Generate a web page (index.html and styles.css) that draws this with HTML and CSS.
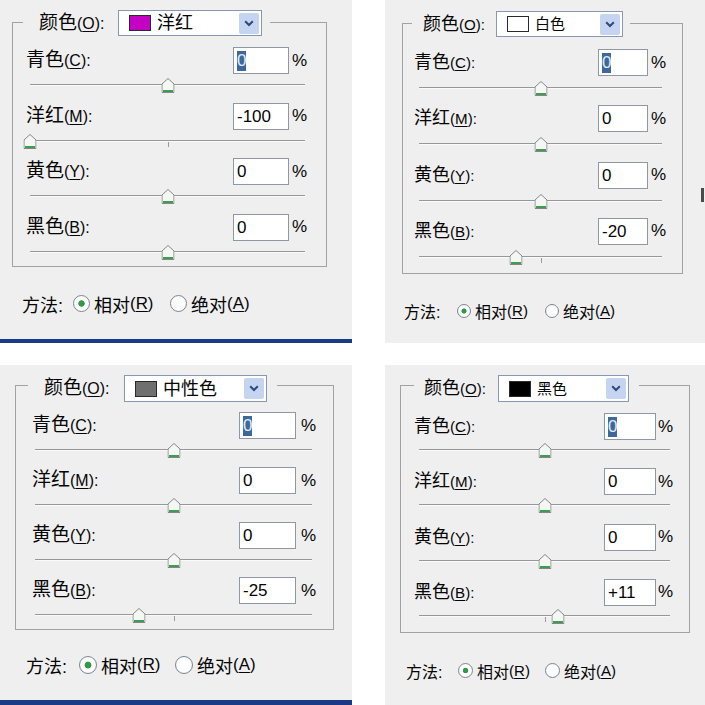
FILE: index.html
```html
<!DOCTYPE html>
<html lang="zh-CN">
<head>
    <meta charset="UTF-8">
    <meta name="viewport" content="width=device-width, initial-scale=1.0">
    <title>可选颜色</title>
    <link rel="stylesheet" href="styles.css">
</head>
<body>
    <svg class="defs" width="0" height="0" aria-hidden="true">
        <symbol id="knob" viewBox="0 0 13 15">
            <path d="M0.5 6 L6.5 0.5 L12.5 6 V14.5 H0.5 Z" fill="#f4f8f4" stroke="#858585"/>
            <path d="M1.5 13 H11.5" stroke="#3f9d4f" stroke-width="2"/>
        </symbol>
        <symbol id="chevron" viewBox="0 0 10 7">
            <path d="M1.2 1.2 L5 5 L8.8 1.2" fill="none" stroke="#2f4a7a" stroke-width="2"/>
        </symbol>
    </svg>

    <div class="sheet">
        <!-- 洋红 -->
        <section class="dlg dlg-1">
            <fieldset class="group">
                <legend class="group-head">
                    <span class="lbl head-lbl">颜色<span class="key">(<u>O</u>):</span></span>
                    <span class="dd">
                        <span class="swatch swatch-magenta"></span>
                        <span class="dd-text">洋红</span>
                        <span class="dd-btn"><svg width="10" height="7"><use href="#chevron"/></svg></span>
                    </span>
                </legend>
                <div class="row">
                    <span class="lbl row-lbl">青色<span class="key">(<u>C</u>):</span></span>
                    <span class="num"><span class="sel">0</span></span>
                    <span class="pct">%</span>
                </div>
                <div class="slider"><svg class="knob" style="left:50%"><use href="#knob"/></svg></div>
                <div class="row">
                    <span class="lbl row-lbl">洋红<span class="key">(<u>M</u>):</span></span>
                    <span class="num">-100</span>
                    <span class="pct">%</span>
                </div>
                <div class="slider"><svg class="knob" style="left:0%"><use href="#knob"/></svg></div>
                <div class="row">
                    <span class="lbl row-lbl">黄色<span class="key">(<u>Y</u>):</span></span>
                    <span class="num">0</span>
                    <span class="pct">%</span>
                </div>
                <div class="slider"><svg class="knob" style="left:50%"><use href="#knob"/></svg></div>
                <div class="row">
                    <span class="lbl row-lbl">黑色<span class="key">(<u>B</u>):</span></span>
                    <span class="num">0</span>
                    <span class="pct">%</span>
                </div>
                <div class="slider"><svg class="knob" style="left:50%"><use href="#knob"/></svg></div>
            </fieldset>
            <div class="method">
                <span class="method-lbl">方法:</span>
                <span class="opt"><span class="radio on"></span>相对<span class="key">(<u>R</u>)</span></span>
                <span class="opt"><span class="radio"></span>绝对<span class="key">(<u>A</u>)</span></span>
            </div>
        </section>

        <!-- 白色 -->
        <section class="dlg dlg-2">
            <fieldset class="group">
                <legend class="group-head">
                    <span class="lbl head-lbl">颜色<span class="key">(<u>O</u>):</span></span>
                    <span class="dd">
                        <span class="swatch swatch-white"></span>
                        <span class="dd-text">白色</span>
                        <span class="dd-btn"><svg width="10" height="7"><use href="#chevron"/></svg></span>
                    </span>
                </legend>
                <div class="row">
                    <span class="lbl row-lbl">青色<span class="key">(<u>C</u>):</span></span>
                    <span class="num"><span class="sel">0</span></span>
                    <span class="pct">%</span>
                </div>
                <div class="slider"><svg class="knob" style="left:50%"><use href="#knob"/></svg></div>
                <div class="row">
                    <span class="lbl row-lbl">洋红<span class="key">(<u>M</u>):</span></span>
                    <span class="num">0</span>
                    <span class="pct">%</span>
                </div>
                <div class="slider"><svg class="knob" style="left:50%"><use href="#knob"/></svg></div>
                <div class="row">
                    <span class="lbl row-lbl">黄色<span class="key">(<u>Y</u>):</span></span>
                    <span class="num">0</span>
                    <span class="pct">%</span>
                </div>
                <div class="slider"><svg class="knob" style="left:50%"><use href="#knob"/></svg></div>
                <div class="row">
                    <span class="lbl row-lbl">黑色<span class="key">(<u>B</u>):</span></span>
                    <span class="num">-20</span>
                    <span class="pct">%</span>
                </div>
                <div class="slider"><svg class="knob" style="left:40%"><use href="#knob"/></svg></div>
            </fieldset>
            <div class="method">
                <span class="method-lbl">方法:</span>
                <span class="opt"><span class="radio on"></span>相对<span class="key">(<u>R</u>)</span></span>
                <span class="opt"><span class="radio"></span>绝对<span class="key">(<u>A</u>)</span></span>
            </div>
        </section>

        <!-- 中性色 -->
        <section class="dlg dlg-3">
            <fieldset class="group">
                <legend class="group-head">
                    <span class="lbl head-lbl">颜色<span class="key">(<u>O</u>):</span></span>
                    <span class="dd">
                        <span class="swatch swatch-gray"></span>
                        <span class="dd-text">中性色</span>
                        <span class="dd-btn"><svg width="10" height="7"><use href="#chevron"/></svg></span>
                    </span>
                </legend>
                <div class="row">
                    <span class="lbl row-lbl">青色<span class="key">(<u>C</u>):</span></span>
                    <span class="num"><span class="sel">0</span></span>
                    <span class="pct">%</span>
                </div>
                <div class="slider"><svg class="knob" style="left:50%"><use href="#knob"/></svg></div>
                <div class="row">
                    <span class="lbl row-lbl">洋红<span class="key">(<u>M</u>):</span></span>
                    <span class="num">0</span>
                    <span class="pct">%</span>
                </div>
                <div class="slider"><svg class="knob" style="left:50%"><use href="#knob"/></svg></div>
                <div class="row">
                    <span class="lbl row-lbl">黄色<span class="key">(<u>Y</u>):</span></span>
                    <span class="num">0</span>
                    <span class="pct">%</span>
                </div>
                <div class="slider"><svg class="knob" style="left:50%"><use href="#knob"/></svg></div>
                <div class="row">
                    <span class="lbl row-lbl">黑色<span class="key">(<u>B</u>):</span></span>
                    <span class="num">-25</span>
                    <span class="pct">%</span>
                </div>
                <div class="slider"><svg class="knob" style="left:37.5%"><use href="#knob"/></svg></div>
            </fieldset>
            <div class="method">
                <span class="method-lbl">方法:</span>
                <span class="opt"><span class="radio on"></span>相对<span class="key">(<u>R</u>)</span></span>
                <span class="opt"><span class="radio"></span>绝对<span class="key">(<u>A</u>)</span></span>
            </div>
        </section>

        <!-- 黑色 -->
        <section class="dlg dlg-4">
            <fieldset class="group">
                <legend class="group-head">
                    <span class="lbl head-lbl">颜色<span class="key">(<u>O</u>):</span></span>
                    <span class="dd">
                        <span class="swatch swatch-black"></span>
                        <span class="dd-text">黑色</span>
                        <span class="dd-btn"><svg width="10" height="7"><use href="#chevron"/></svg></span>
                    </span>
                </legend>
                <div class="row">
                    <span class="lbl row-lbl">青色<span class="key">(<u>C</u>):</span></span>
                    <span class="num"><span class="sel">0</span></span>
                    <span class="pct">%</span>
                </div>
                <div class="slider"><svg class="knob" style="left:50%"><use href="#knob"/></svg></div>
                <div class="row">
                    <span class="lbl row-lbl">洋红<span class="key">(<u>M</u>):</span></span>
                    <span class="num">0</span>
                    <span class="pct">%</span>
                </div>
                <div class="slider"><svg class="knob" style="left:50%"><use href="#knob"/></svg></div>
                <div class="row">
                    <span class="lbl row-lbl">黄色<span class="key">(<u>Y</u>):</span></span>
                    <span class="num">0</span>
                    <span class="pct">%</span>
                </div>
                <div class="slider"><svg class="knob" style="left:50%"><use href="#knob"/></svg></div>
                <div class="row">
                    <span class="lbl row-lbl">黑色<span class="key">(<u>B</u>):</span></span>
                    <span class="num">+11</span>
                    <span class="pct">%</span>
                </div>
                <div class="slider"><svg class="knob" style="left:55.5%"><use href="#knob"/></svg></div>
            </fieldset>
            <div class="method">
                <span class="method-lbl">方法:</span>
                <span class="opt"><span class="radio on"></span>相对<span class="key">(<u>R</u>)</span></span>
                <span class="opt"><span class="radio"></span>绝对<span class="key">(<u>A</u>)</span></span>
            </div>
        </section>
    </div>
</body>
</html>
```

FILE: styles.css
```css
body {
    margin: 0;
    font-family: "Liberation Sans", "Noto Sans CJK SC", sans-serif;
    color: #050505;
    background: #fff;
}
.defs {
    position: absolute;
}
.sheet {
    display: grid;
    grid-template-columns: 352px 320px;
    grid-template-rows: 343px 340px;
    column-gap: 33px;
    row-gap: 22px;
}

/* one dialog; the numbers per screenshot live in the dlg-N blocks */
.dlg {
    position: relative;
    box-sizing: border-box;
    padding-top: var(--top);
    background: #efefef;
    overflow: hidden;
}
.dlg-1 {
    border-bottom: 4px solid #1b3a86;
    --top: 8px; --lpt: 2px; --dh: 26px;
    --fl: 12px; --fw: 315px;
    --lg: 10px; --lpl: 16px; --lw: 79px; --dw: 144px; --lpr: 8px;
    --fs: 19px; --dfs: 18px;
    --r0: 11px; --rg: 4.67px; --smt: 4px;
    --rx: 13px; --rlw: 207px; --iw: 56px; --pg: 3px;
    --sx: 17px; --sw: 275px; --fpb: 1px;
    --mt: 27px; --mx: 22px; --mlw: 51px; --ow: 97px; --rs: 17px; --mfs: 18px;
}
.dlg-2 {
    --top: 9px; --lpt: 2px; --dh: 26px;
    --fl: 17px; --fw: 281px;
    --lg: 9px; --lpl: 11px; --lw: 73px; --dw: 127px; --lpr: 7px;
    --fs: 18px; --dfs: 15px;
    --r0: 12px; --rg: 4.33px; --smt: 5px;
    --rx: 11px; --rlw: 184px; --iw: 50px; --pg: 3px;
    --sx: 16px; --sw: 243px; --fpb: 3px;
    --mt: 27px; --mx: 19px; --mlw: 53px; --ow: 88px; --rs: 14px; --mfs: 16px;
}
.dlg-2::after {
    content: "";
    position: absolute;
    right: 1px;
    top: 188px;
    width: 3px;
    height: 14px;
    background: #4a4a4a;
}
.dlg-3 {
    border-bottom: 5px solid #1b3a86;
    --top: 3px; --lpt: 7px; --dh: 27px;
    --fl: 15px; --fw: 319px;
    --lg: 12px; --lpl: 16px; --lw: 80px; --dw: 143px; --lpr: 10px;
    --fs: 19px; --dfs: 18px;
    --r0: 10px; --rg: 4px; --smt: 4px;
    --rx: 16px; --rlw: 207px; --iw: 57px; --pg: 5px;
    --sx: 19px; --sw: 277px; --fpb: 1px;
    --mt: 25px; --mx: 26px; --mlw: 53px; --ow: 96px; --rs: 18px; --mfs: 18px;
}
.dlg-4 {
    --top: 3px; --lpt: 7px; --dh: 27px;
    --fl: 15px; --fw: 290px;
    --lg: 13px; --lpl: 10px; --lw: 74px; --dw: 131px; --lpr: 10px;
    --fs: 18px; --dfs: 15px;
    --r0: 11px; --rg: 5.33px; --smt: 3px;
    --rx: 13px; --rlw: 190px; --iw: 52px; --pg: 2px;
    --sx: 18px; --sw: 251px; --fpb: 3px;
    --mt: 28px; --mx: 21px; --mlw: 52px; --ow: 87px; --rs: 15px; --mfs: 16px;
}

/* group box */
.group {
    box-sizing: border-box;
    width: var(--fw);
    min-width: 0;
    margin: 0 0 0 var(--fl);
    padding: 0 0 var(--fpb) 0;
    border: 1px solid #a2a2a2;
}
.group-head {
    display: flex;
    align-items: center;
    margin-left: var(--lg);
    padding: var(--lpt) var(--lpr) 0 var(--lpl);
}
.lbl {
    font-size: var(--fs);
    line-height: 22px;
    white-space: nowrap;
}
.key {
    font-size: 0.84em;
}
u {
    text-decoration-thickness: 1px;
    text-underline-offset: 2px;
}
.head-lbl {
    width: var(--lw);
}

/* colour dropdown */
.dd {
    box-sizing: border-box;
    display: flex;
    align-items: center;
    width: var(--dw);
    height: var(--dh);
    padding: 0 2px 0 10px;
    background: #fff;
    border: 1px solid #8798b3;
}
.swatch {
    box-sizing: border-box;
    width: 22px;
    height: 16px;
    border: 1px solid #2a2a2a;
}
.swatch-magenta { background: #c400c4; }
.swatch-white { background: #fff; }
.swatch-gray { background: #6f6f6f; }
.swatch-black { background: #000; }
.dd-text {
    flex: 1;
    margin-left: 6px;
    font-size: var(--dfs);
    line-height: 20px;
}
.dd-btn {
    display: flex;
    align-items: center;
    justify-content: center;
    width: 20px;
    height: 21px;
    border-radius: 2px;
    background: #c5d4f1;
}

/* value rows */
.row {
    display: flex;
    align-items: center;
    height: 27px;
    margin-left: var(--rx);
}
.group-head + .row {
    margin-top: var(--r0);
}
.slider + .row {
    margin-top: var(--rg);
}
.row-lbl {
    width: var(--rlw);
}
.num {
    box-sizing: border-box;
    width: var(--iw);
    height: 27px;
    padding-left: 3px;
    font-size: 17px;
    line-height: 25px;
    background: #fff;
    border: 1px solid #8e98a4;
}
.sel {
    display: inline-block;
    line-height: 20px;
    background: #3c689c;
    color: #e4edf7;
}
.pct {
    margin-left: var(--pg);
    font-size: 17px;
}

/* slider */
.slider {
    position: relative;
    width: var(--sw);
    height: 20px;
    margin: var(--smt) 0 0 var(--sx);
}
.slider::before {
    content: "";
    position: absolute;
    left: 0;
    right: 0;
    top: 6px;
    height: 1px;
    background: #979797;
    border-bottom: 1px solid #fafafa;
}
.slider::after {
    content: "";
    position: absolute;
    left: 50%;
    top: 8px;
    width: 1px;
    height: 5px;
    background: #9a9a9a;
}
.knob {
    position: absolute;
    top: 0;
    z-index: 1;
    width: 13px;
    height: 15px;
    transform: translateX(-50%);
}

/* method radios */
.method {
    display: flex;
    align-items: center;
    height: 20px;
    margin: var(--mt) 0 0 var(--mx);
    font-size: var(--mfs);
    white-space: nowrap;
}
.method .key {
    font-size: 0.94em;
}
.method-lbl {
    width: var(--mlw);
}
.opt {
    display: flex;
    align-items: center;
    width: var(--ow);
}
.radio {
    box-sizing: border-box;
    width: var(--rs);
    height: var(--rs);
    margin-right: 4px;
    border-radius: 50%;
    border: 1px solid #7a8894;
    background: radial-gradient(circle, #fff 0 55%, #e6e9e6 100%);
}
.radio.on {
    background: radial-gradient(circle, #2f9c45 0 27%, #fff 33% 60%, #e6e9e6 100%);
}
```
